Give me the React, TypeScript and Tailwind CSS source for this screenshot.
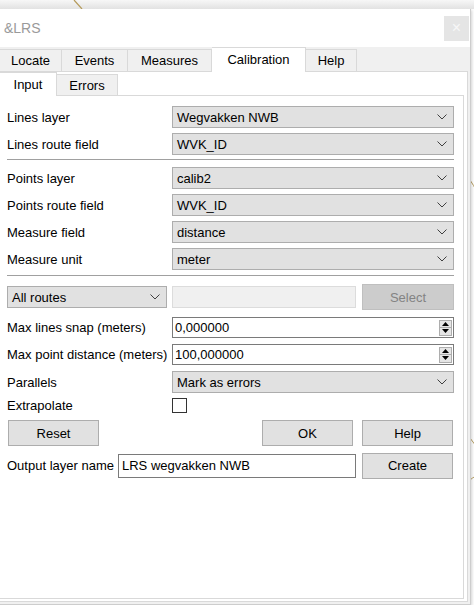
import React from "react";

const Chevron = () => (
  <svg width="10" height="6" viewBox="0 0 10 6" className="shrink-0">
    <path d="M0.5 0.5 L5 5 L9.5 0.5" fill="none" stroke="#404040" strokeWidth="1" />
  </svg>
);

function Combo({ value, className = "" }: { value: string; className?: string }) {
  return (
    <div
      className={`flex items-center justify-between h-[22px] bg-[#e1e1e1] border border-[#adadad] pl-[4px] pr-[6px] ${className}`}
    >
      <span className="whitespace-nowrap">{value}</span>
      <Chevron />
    </div>
  );
}

function Row({ label, children }: { label: string; children: React.ReactNode }) {
  return (
    <div className="flex items-center">
      <div className="w-[165px] shrink-0 whitespace-nowrap">{label}</div>
      <div className="flex-1 flex">{children}</div>
    </div>
  );
}

const Tri = ({ up }: { up: boolean }) => (
  <svg width="7" height="4" viewBox="0 0 7 4">
    {up ? <path d="M0 4 L3.5 0 L7 4 Z" fill="#000" /> : <path d="M0 0 L3.5 4 L7 0 Z" fill="#000" />}
  </svg>
);

function Spin({ value }: { value: string }) {
  return (
    <div className="flex-1 h-[21px] bg-white border border-[#7a7a7a] flex items-center pl-[2px] pr-[1px]">
      <span className="flex-1">{value}</span>
      <div className="flex flex-col">
        <div className="w-[13px] h-[8px] border border-[#adadad] bg-[#e5e5e5] flex items-center justify-center">
          <Tri up />
        </div>
        <div className="w-[13px] h-[8px] border border-[#adadad] border-t-0 bg-[#e5e5e5] flex items-center justify-center">
          <Tri up={false} />
        </div>
      </div>
    </div>
  );
}

function Btn({ label, className = "" }: { label: string; className?: string }) {
  return (
    <div
      className={`h-[26px] w-[91px] bg-[#e1e1e1] border border-[#adadad] flex items-center justify-center ${className}`}
    >
      {label}
    </div>
  );
}

export default function App() {
  const topTabs = [
    { name: "Locate", w: "w-[62px]" },
    { name: "Events", w: "w-[66px]" },
    { name: "Measures", w: "w-[84px]" },
    { name: "Calibration", w: "w-[94px]", sel: true },
    { name: "Help", w: "w-[51px]" },
  ];
  return (
    <div className="relative w-[474px] h-[605px] overflow-hidden bg-white font-['Liberation_Sans',Arial,sans-serif] text-[13px] text-black leading-none">
      <svg className="absolute inset-0" width="474" height="605">
        <path d="M470 180 Q 474 186 476 190" stroke="#b79f62" strokeWidth="1" fill="none" />
        <path d="M470 438 Q 473 442 476 446" stroke="#b79f62" strokeWidth="1" fill="none" />
        <path d="M470 480 Q 472 478 476 476" stroke="#b79f62" strokeWidth="1" fill="none" />
      </svg>
      <div className="relative flex flex-col">
        <div className="relative h-[9px] bg-linear-to-b from-[#f7f7f7] to-[#e2e2e2]">
          <svg className="absolute left-0 top-0" width="100" height="9">
            <path d="M74 0 L82 9" stroke="#b59a5a" strokeWidth="1.2" />
          </svg>
        </div>
        <div className="w-[471px] h-[596px] flex flex-col bg-[#f0f0f0] border-r border-b border-[#cdcdcd] pr-[2px] pb-[2px] shadow-[1px_1px_3px_rgba(0,0,0,0.18)]">
          {/* title bar */}
          <div className="h-[38px] -mr-[2px] bg-white flex items-center justify-between pl-[4px] pr-[1px]">
            <span className="text-[14px] text-[#9a9a9a]">&amp;LRS</span>
            <div className="w-[25px] h-[25px] bg-[#e5e5e5] flex items-center justify-center text-[#f7f7f7] text-[16px]">
              ×
            </div>
          </div>
          {/* top tabs */}
          <div className="flex items-end h-[25px]">
            {topTabs.map((t) =>
              t.sel ? (
                <div
                  key={t.name}
                  className={`${t.w} h-[25px] bg-white border-t border-r border-[#d9d9d9] flex items-center justify-center pb-[2px]`}
                >
                  {t.name}
                </div>
              ) : (
                <div
                  key={t.name}
                  className={`${t.w} h-[23px] bg-[#f0f0f0] border-t border-r border-b border-[#d9d9d9] flex items-center justify-center`}
                >
                  {t.name}
                </div>
              )
            )}
            <div className="flex-1 h-[1px] bg-[#d9d9d9]" />
          </div>
          {/* outer pane */}
          <div className="flex-1 flex flex-col bg-white border-r border-b border-[#d9d9d9] pr-[3px] pb-[2px]">
            <div className="flex items-end h-[24px]">
              <div className="w-[57px] h-[24px] bg-white border-t border-r border-[#d9d9d9] flex items-center justify-center">
                Input
              </div>
              <div className="w-[61px] h-[22px] bg-[#f0f0f0] border-t border-r border-b border-[#d9d9d9] flex items-center justify-center">
                Errors
              </div>
              <div className="flex-1 h-[1px] bg-[#d9d9d9]" />
            </div>
            {/* inner pane */}
            <div className="flex-1 flex flex-col bg-white border-r border-b border-[#d9d9d9] pl-[7px] pr-[9px] pt-[10px]">
              <div className="flex flex-col gap-[5px]">
                <Row label="Lines layer">
                  <Combo value="Wegvakken NWB" className="flex-1" />
                </Row>
                <Row label="Lines route field">
                  <Combo value="WVK_ID" className="flex-1" />
                </Row>
              </div>
              <div className="mt-[4px] h-[1px] bg-[#a0a0a0]" />
              <div className="mt-[7px] flex flex-col gap-[5px]">
                <Row label="Points layer">
                  <Combo value="calib2" className="flex-1" />
                </Row>
                <Row label="Points route field">
                  <Combo value="WVK_ID" className="flex-1" />
                </Row>
                <Row label="Measure field">
                  <Combo value="distance" className="flex-1" />
                </Row>
                <Row label="Measure unit">
                  <Combo value="meter" className="flex-1" />
                </Row>
              </div>
              <div className="mt-[5px] h-[1px] bg-[#a0a0a0]" />
              <div className="mt-[8px] flex items-center h-[26px]">
                <Combo value="All routes" className="w-[160px]" />
                <div className="ml-[5px] w-[184px] h-[22px] bg-[#f0f0f0] border border-[#dcdcdc]" />
                <div className="ml-[6px] flex-1 h-[26px] bg-[#cccccc] border border-[#bfbfbf] flex items-center justify-center text-[#838383]">
                  Select
                </div>
              </div>
              <div className="mt-[7px] flex flex-col gap-[6px]">
                <Row label="Max lines snap (meters)">
                  <Spin value="0,000000" />
                </Row>
                <Row label="Max point distance (meters)">
                  <Spin value="100,000000" />
                </Row>
                <Row label="Parallels">
                  <Combo value="Mark as errors" className="flex-1 h-[21px]" />
                </Row>
              </div>
              <div className="mt-[5px] flex items-center h-[15px]">
                <div className="w-[165px] shrink-0">Extrapolate</div>
                <div className="w-[15px] h-[15px] bg-white border border-[#333333]" />
              </div>
              <div className="mt-[7px] flex items-center h-[26px] pl-[1px]">
                <Btn label="Reset" />
                <div className="flex-1" />
                <Btn label="OK" />
                <Btn label="Help" className="ml-[9px] mr-[1px]" />
              </div>
              <div className="mt-[7px] flex items-center h-[25px]">
                <div className="w-[111px] shrink-0 whitespace-nowrap">Output layer name</div>
                <div className="w-[238px] h-[24px] bg-white border border-[#7a7a7a] flex items-center pl-[3px]">
                  LRS wegvakken NWB
                </div>
                <div className="flex-1" />
                <Btn label="Create" className="h-[25px] mr-[1px]" />
              </div>
            </div>
          </div>
        </div>
      </div>
    </div>
  );
}
